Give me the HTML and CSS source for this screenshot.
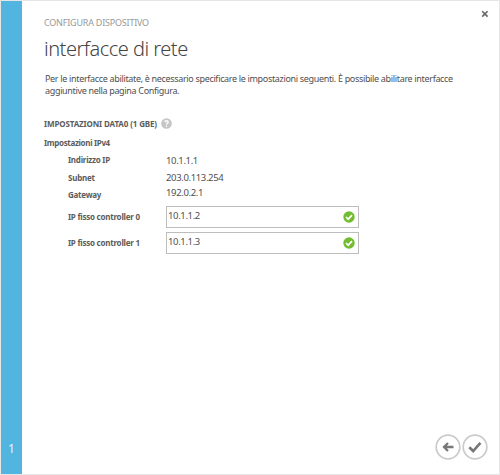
FILE: index.html
```html
<!DOCTYPE html>
<html lang="it">
<head>
<meta charset="utf-8">
<title>Configura dispositivo</title>
<link rel="stylesheet" href="styles.css">
</head>
<body>
<div class="dialog">
  <aside class="steps"><span>1</span></aside>
  <main class="content">
    <p class="eyebrow">CONFIGURA DISPOSITIVO</p>
    <h1 class="title">interfacce di rete</h1>
    <p class="intro">Per le interfacce abilitate, è necessario specificare le impostazioni seguenti. È possibile abilitare interfacce<br>aggiuntive nella pagina Configura.</p>
    <h2 class="section"><span>IMPOSTAZIONI DATA0 (1 GBE)</span>
      <svg class="help" viewBox="0 0 12 12"><circle cx="6" cy="6" r="5.8" fill="#c6c6c6"/><path d="M4.2 4.5C4.3 2.4 7.8 2.5 7.8 4.5C7.8 5.8 6 5.7 6 7.1M6 8.2V9.5" fill="none" stroke="#fff" stroke-width="1.5"/></svg>
    </h2>
    <h3 class="group">Impostazioni IPv4</h3>
    <dl class="fields">
      <dt>Indirizzo IP</dt><dd class="v1">10.1.1.1</dd>
      <dt>Subnet</dt><dd>203.0.113.254</dd>
      <dt>Gateway</dt><dd class="v3">192.0.2.1</dd>
    </dl>
    <div class="inputs">
      <label>IP fisso controller 0</label>
      <div class="input"><span>10.1.1.2</span><svg viewBox="0 0 12 12"><circle cx="6" cy="6" r="5.7" fill="#72bd2e"/><path d="M3 6L5.2 8.2L9 4.2" fill="none" stroke="#fff" stroke-width="1.7"/></svg></div>
      <label>IP fisso controller 1</label>
      <div class="input"><span>10.1.1.3</span><svg viewBox="0 0 12 12"><circle cx="6" cy="6" r="5.7" fill="#72bd2e"/><path d="M3 6L5.2 8.2L9 4.2" fill="none" stroke="#fff" stroke-width="1.7"/></svg></div>
    </div>
    <footer class="actions">
      <svg viewBox="0 0 26 26"><circle cx="13" cy="13" r="11.8" fill="#fff" stroke="#cbcbcb" stroke-width="1.7"/><path d="M18.5 13H9.5M13 9L9 13L13 17" fill="none" stroke="#777" stroke-width="2.3"/></svg>
      <svg viewBox="0 0 26 26"><circle cx="13" cy="13" r="11.8" fill="#fff" stroke="#cbcbcb" stroke-width="1.7"/><path d="M7.3 13.2L11.2 17L18.4 8.8" fill="none" stroke="#777" stroke-width="2.6"/></svg>
    </footer>
  </main>
  <svg class="close" viewBox="0 0 8 8"><path d="M1.2 1.2L6.6 6.6M6.6 1.2L1.2 6.6" stroke="#666" stroke-width="1.6"/></svg>
</div>
</body>
</html>
```
FILE: styles.css
```css
* { box-sizing: border-box; margin: 0; padding: 0; }
body { width: 500px; height: 475px; overflow: hidden; background: #fff; color: #4f4f4f; font-family: "Noto Sans", "Open Sans", sans-serif; font-size: 9px; line-height: 12px; }
.dialog { position: relative; display: flex; width: 500px; height: 475px; border: 1px solid #e6e6e6; }
.steps { width: 21px; background: #52b5e0; color: #e8f6fc; display: flex; align-items: flex-end; justify-content: center; padding-bottom: 18px; font-size: 12px; line-height: 14px; }
.content { flex: 1; display: flex; flex-direction: column; padding: 16px 11px 14px 22px; white-space: nowrap; }
.eyebrow { color: #999; font-size: 9px; letter-spacing: -0.21px; }
.title { margin-top: 6px; font-size: 20px; line-height: 28px; font-weight: 300; letter-spacing: -0.5px; color: #444; }
.intro { margin: 10px 0 0 1px; letter-spacing: -0.33px; }
.section { display: flex; align-items: center; gap: 4px; margin-top: 21px; height: 12px; font-size: 8px; letter-spacing: -0.13px; color: #5c5c5c; }
.help { width: 11px; height: 11px; position: relative; top: -1px; }
.group { margin-top: 7px; font-size: 8px; letter-spacing: -0.33px; color: #5c5c5c; }
.fields { display: grid; grid-template-columns: 98px 1fr; grid-template-rows: 18px 17px 17px; margin: 5px 0 0 24px; }
dt, label { font-size: 8px; font-weight: 700; letter-spacing: -0.24px; color: #5c5c5c; }
dd { font-size: 9.5px; letter-spacing: -0.36px; }
.v1 { padding-top: 1px; }
.v3 { margin-top: -2px; }
.inputs { display: grid; grid-template-columns: 98px 193px; row-gap: 4px; align-items: center; margin: 0 0 0 24px; }
.input { height: 22px; border: 1px solid #bdbdbd; display: flex; align-items: center; justify-content: space-between; padding: 0 3.5px 2px 1px; font-size: 9.5px; letter-spacing: -0.36px; }
.input svg { width: 12px; height: 12px; position: relative; top: 0.5px; }
.actions { display: flex; justify-content: flex-end; gap: 1px; margin-top: auto; }
.actions svg { width: 26px; height: 26px; }
.close { position: absolute; top: 9px; right: 10px; width: 8px; height: 8px; }
```
